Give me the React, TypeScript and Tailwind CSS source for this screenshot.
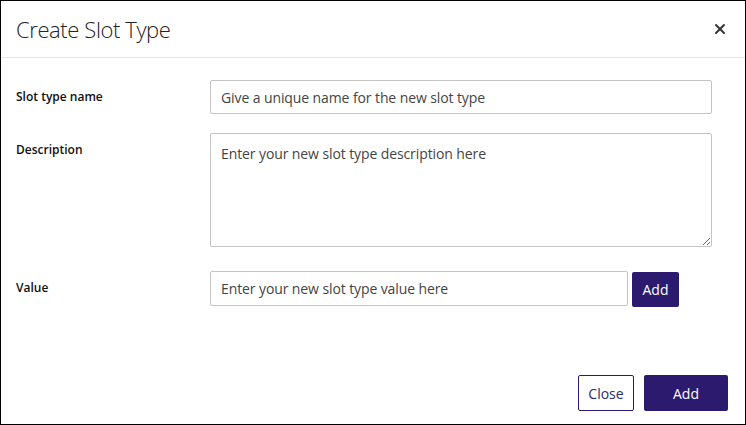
import { X } from 'lucide-react';

const font = { fontFamily: '"Open Sans", "Noto Sans", sans-serif' };

export default function App() {
  return (
    <div className="h-[425px] w-[746px] border border-black bg-white text-[#333]" style={font}>
      {/* Header */}
      <div className="flex h-[57px] items-center justify-between border-b border-[#e5e5e5] pl-[15px] pr-[17px]">
        <h1 className="text-[22px] font-light tracking-[-0.4px] text-[#222]">Create Slot Type</h1>
        <X size={16} strokeWidth={3} className="text-[#333]" />
      </div>

      {/* Body */}
      <div className="flex h-[300px] flex-col pl-[15px] pt-[22px]">
        <div className="flex items-start">
          <label className="w-[194px] pt-[8px] text-[12px] font-semibold text-[#111]">Slot type name</label>
          <input
            className="h-[34px] w-[502px] rounded-[2px] border border-[#c4c4c4] px-[10px] text-[14px] tracking-[-0.1px] placeholder:text-[#444] focus:outline-none"
            placeholder="Give a unique name for the new slot type"
          />
        </div>
        <div className="mt-[19px] flex items-start">
          <label className="w-[194px] pt-[8px] text-[12px] font-semibold text-[#111]">Description</label>
          <textarea
            className="h-[114px] w-[502px] rounded-[2px] border border-[#c4c4c4] px-[10px] py-[9px] text-[14px] tracking-[-0.1px] placeholder:text-[#444] focus:outline-none"
            placeholder="Enter your new slot type description here"
          />
        </div>
        <div className="mt-[24px] flex items-start">
          <label className="w-[194px] pt-[8px] text-[12px] font-semibold text-[#111]">Value</label>
          <input
            className="h-[35px] w-[418px] rounded-[2px] border border-[#c4c4c4] px-[10px] text-[14px] tracking-[-0.1px] placeholder:text-[#444] focus:outline-none"
            placeholder="Enter your new slot type value here"
          />
          <button className="ml-[4px] mt-[1px] h-[35px] w-[47px] rounded-[2px] bg-[#2b1a6e] text-[14px] text-white">
            Add
          </button>
        </div>
      </div>

      {/* Footer */}
      <div className="flex justify-end gap-[10px] pr-[17px] pt-[17px]">
        <button className="h-[36px] w-[56px] rounded-[2px] border border-[#2b1a6e] bg-white text-[14px] text-[#2b2b6e]">
          Close
        </button>
        <button className="h-[36px] w-[84px] rounded-[2px] bg-[#2b1a6e] text-[14px] text-white">Add</button>
      </div>
    </div>
  );
}
